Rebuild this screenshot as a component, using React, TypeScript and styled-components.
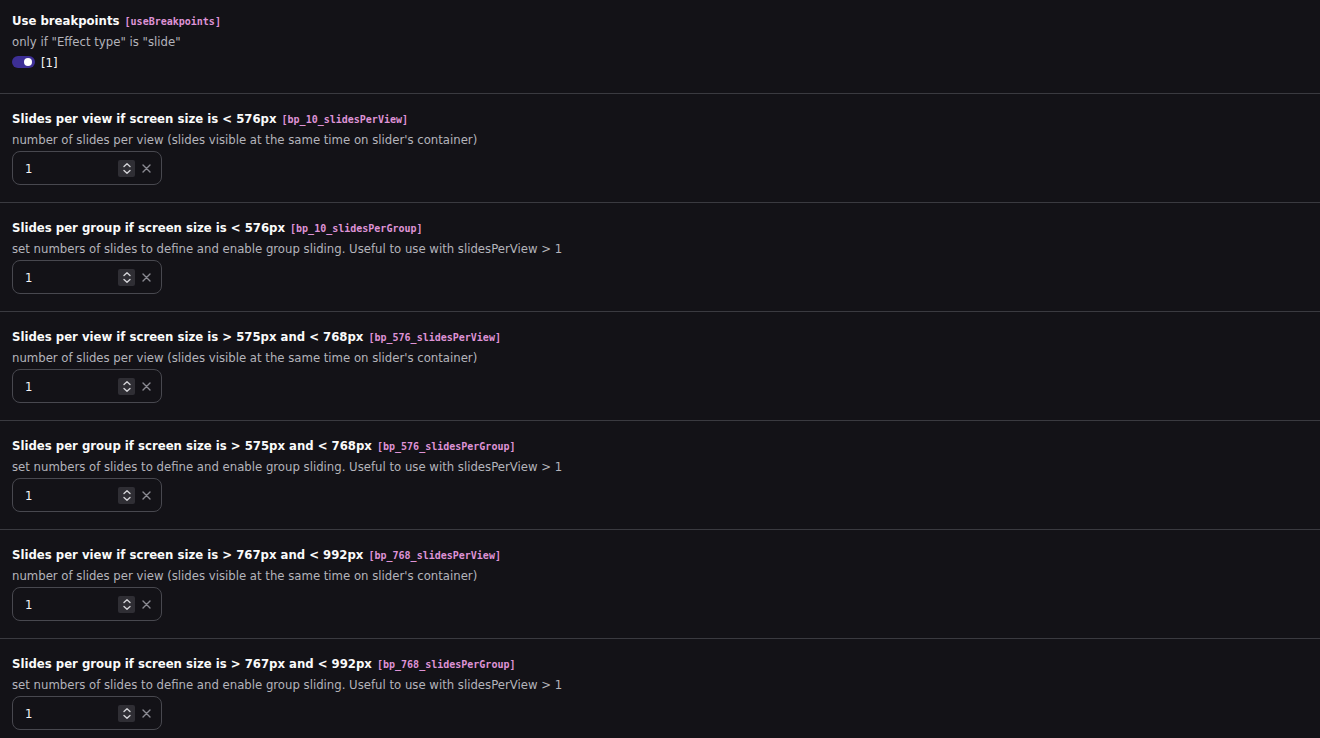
import React from "react";
import styled, { createGlobalStyle } from "styled-components";

const GlobalStyle = createGlobalStyle`
  html, body {
    margin: 0;
    padding: 0;
    background: #131217;
  }
  body {
    font-family: "DejaVu Sans Condensed", "DejaVu Sans", Verdana, sans-serif;
    font-stretch: condensed;
    color: #e4e4e7;
  }
`;

type Field = {
  title: string;
  code: string;
  desc: string;
};

const Page = styled.div`
  display: flex;
  flex-direction: column;
`;

const Section = styled.section<{ $first?: boolean }>`
  padding: ${({ $first }) => ($first ? "12px 12px 22px" : "16px 12px 17px")};
  border-bottom: 1px solid #3a3a40;
  &:last-child {
    border-bottom: 0;
  }
`;

const Title = styled.div`
  font-size: 13px;
  font-weight: 700;
  color: #fafafa;
  line-height: 17px;
`;

const Code = styled.code`
  font-family: "DejaVu Sans Mono", "Liberation Mono", monospace;
  font-stretch: normal;
  font-size: 10px;
  font-weight: 700;
  color: #df93d6;
  margin-left: 1px;
`;

const Desc = styled.div`
  margin-top: 4px;
  font-size: 13px;
  color: #b4b4bb;
  line-height: 16px;
`;

const ToggleRow = styled.div`
  display: flex;
  align-items: center;
  gap: 6px;
  height: 18px;
  margin-top: 3px;
  font-size: 13px;
  color: #f4f4f5;
`;

const Toggle = styled.span`
  position: relative;
  width: 23px;
  height: 12px;
  border-radius: 6px;
  background: #3d2f95;
  &::after {
    content: "";
    position: absolute;
    right: 3px;
    top: 2px;
    width: 8px;
    height: 8px;
    border-radius: 50%;
    background: #ffffff;
  }
`;

const InputBox = styled.div`
  margin-top: 3px;
  width: 150px;
  height: 34px;
  box-sizing: border-box;
  border: 1px solid #48484f;
  border-radius: 8px;
  display: flex;
  align-items: center;
  padding: 0 10px 0 12px;
  gap: 7px;
`;

const Value = styled.span`
  flex: 1;
  font-size: 13px;
  color: #f4f4f5;
`;

const Spinner = styled.span`
  width: 17px;
  height: 17px;
  background: #2f2e34;
  border-radius: 2px;
  display: flex;
  align-items: center;
  justify-content: center;
`;

const Clear = styled.span`
  display: flex;
  align-items: center;
`;

const fields: Field[] = [
  {
    title: "Slides per view if screen size is < 576px",
    code: "bp_10_slidesPerView",
    desc: "number of slides per view (slides visible at the same time on slider's container)",
  },
  {
    title: "Slides per group if screen size is < 576px",
    code: "bp_10_slidesPerGroup",
    desc: "set numbers of slides to define and enable group sliding. Useful to use with slidesPerView > 1",
  },
  {
    title: "Slides per view if screen size is > 575px and < 768px",
    code: "bp_576_slidesPerView",
    desc: "number of slides per view (slides visible at the same time on slider's container)",
  },
  {
    title: "Slides per group if screen size is > 575px and < 768px",
    code: "bp_576_slidesPerGroup",
    desc: "set numbers of slides to define and enable group sliding. Useful to use with slidesPerView > 1",
  },
  {
    title: "Slides per view if screen size is > 767px and < 992px",
    code: "bp_768_slidesPerView",
    desc: "number of slides per view (slides visible at the same time on slider's container)",
  },
  {
    title: "Slides per group if screen size is > 767px and < 992px",
    code: "bp_768_slidesPerGroup",
    desc: "set numbers of slides to define and enable group sliding. Useful to use with slidesPerView > 1",
  },
];

function NumberInput() {
  return (
    <InputBox>
      <Value>1</Value>
      <Spinner>
        <svg width="10" height="13" viewBox="0 0 10 13" fill="none" stroke="#d4d4d8" strokeWidth="1.4" strokeLinecap="round" strokeLinejoin="round">
          <path d="M2 4.5 L5 1.8 L8 4.5" />
          <path d="M2 8.5 L5 11.2 L8 8.5" />
        </svg>
      </Spinner>
      <Clear>
        <svg width="9" height="9" viewBox="0 0 9 9" stroke="#8a8a92" strokeWidth="1.4" strokeLinecap="round">
          <path d="M1 1 L8 8 M8 1 L1 8" />
        </svg>
      </Clear>
    </InputBox>
  );
}

export default function App() {
  return (
    <Page>
      <GlobalStyle />
      <Section $first>
        <Title>
          Use breakpoints <Code>[useBreakpoints]</Code>
        </Title>
        <Desc>only if "Effect type" is "slide"</Desc>
        <ToggleRow>
          <Toggle />
          [1]
        </ToggleRow>
      </Section>
      {fields.map((f) => (
        <Section key={f.code}>
          <Title>
            {f.title} <Code>[{f.code}]</Code>
          </Title>
          <Desc>{f.desc}</Desc>
          <NumberInput />
        </Section>
      ))}
    </Page>
  );
}
